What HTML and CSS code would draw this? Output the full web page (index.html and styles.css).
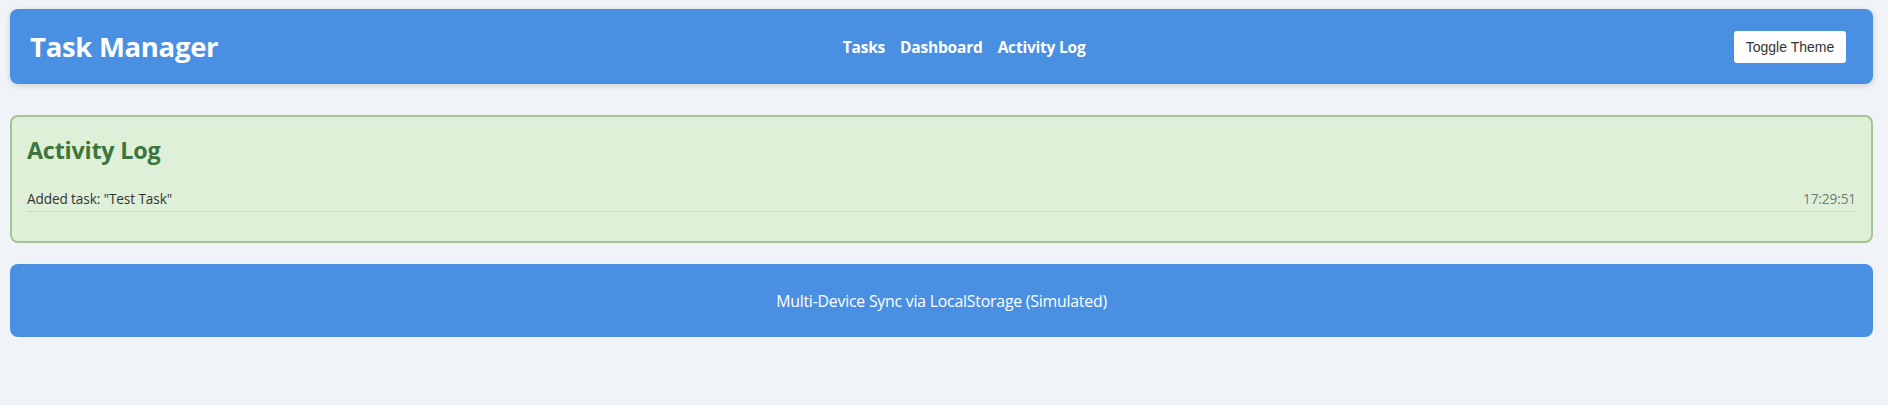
FILE: index.html
```html
<!DOCTYPE html>
<html lang="en">
<head>
<meta charset="utf-8">
<title>Task Manager</title>
<link rel="stylesheet" href="styles.css">
</head>
<body>
<div class="app">
  <header class="topbar">
    <h1 class="brand">Task Manager</h1>
    <nav class="nav">
      <a class="nav-link" href="#">Tasks</a>
      <a class="nav-link" href="#">Dashboard</a>
      <a class="nav-link" href="#">Activity Log</a>
    </nav>
    <button class="theme-btn" type="button">Toggle Theme</button>
  </header>

  <section class="log-card">
    <h2 class="log-title">Activity Log</h2>
    <ul class="log-list">
      <li class="log-item">
        <span class="log-text">Added task: "Test Task"</span>
        <span class="log-time">17:29:51</span>
      </li>
    </ul>
  </section>

  <footer class="footer">Multi-Device Sync via LocalStorage (Simulated)</footer>
</div>
</body>
</html>
```

FILE: styles.css
```css
* { box-sizing: border-box; }

html, body {
  margin: 0;
  padding: 0;
  background: #f0f3f8;
  font-family: "Open Sans", "Noto Sans", sans-serif;
  color: #333;
}

.app {
  padding: 9px 15px 0 10px;
}

.topbar {
  height: 75px;
  display: flex;
  align-items: center;
  justify-content: space-between;
  padding: 0 27px 0 20px;
  background: #4a90e2;
  border-radius: 8px;
  box-shadow: 0 2px 6px rgba(0, 0, 0, 0.15);
  color: #fff;
}

.brand {
  margin: 0;
  font-size: 27.5px;
  font-weight: 700;
  letter-spacing: -0.3px;
}

.nav {
  display: flex;
  gap: 15px;
  margin-right: 24px;
}

.nav-link {
  color: #fff;
  text-decoration: none;
  font-weight: 700;
  font-size: 15.5px;
  letter-spacing: -0.2px;
}

.theme-btn {
  width: 112px;
  height: 32px;
  padding: 0;
  border: none;
  border-radius: 3px;
  background: #fff;
  color: #333;
  font-family: "Liberation Sans", Arial, sans-serif;
  font-size: 14px;
}

.log-card {
  margin-top: 31px;
  height: 128px;
  padding: 15px;
  background: #dff0d8;
  border: 2px solid #a5c495;
  border-radius: 8px;
}

.log-title {
  margin: 2px 0 23px;
  font-size: 23.3px;
  font-weight: 700;
  color: #3c763d;
  letter-spacing: -0.2px;
}

.log-list {
  list-style: none;
  margin: 0;
  padding: 0;
}

.log-item {
  display: flex;
  justify-content: space-between;
  align-items: baseline;
  padding-bottom: 3px;
  border-bottom: 1px solid #c8e0bd;
  font-size: 13.6px;
  letter-spacing: -0.1px;
}

.log-text { color: #333; }
.log-time { color: #6f7a74; }

.footer {
  margin-top: 21px;
  height: 73px;
  display: flex;
  align-items: center;
  justify-content: center;
  background: #4a90e2;
  border-radius: 8px;
  color: #fff;
  font-size: 15.8px;
  letter-spacing: -0.2px;
}
```
